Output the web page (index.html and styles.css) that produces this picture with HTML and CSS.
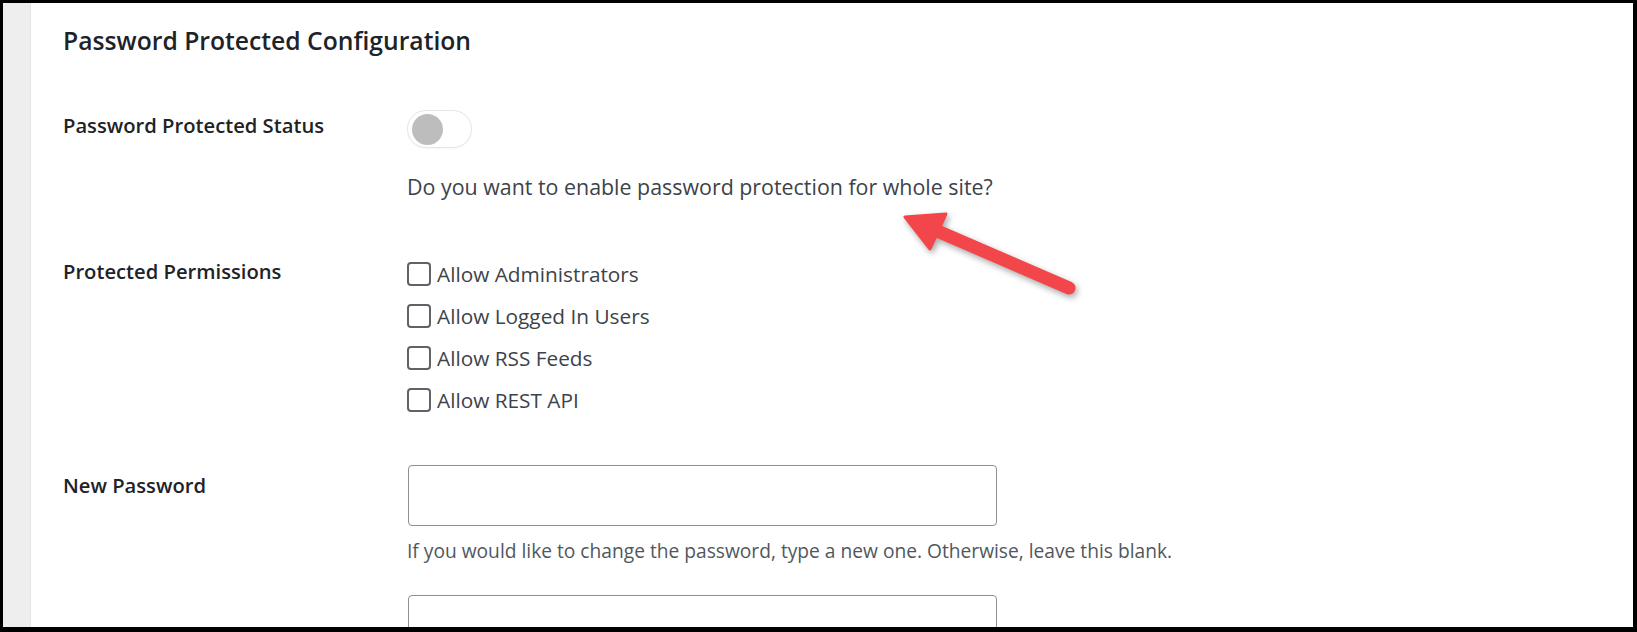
FILE: index.html
```html
<!DOCTYPE html>
<html lang="en">
<head>
  <meta charset="UTF-8" />
  <meta name="viewport" content="width=device-width, initial-scale=1" />
  <title>Password Protected Configuration</title>
  <link rel="stylesheet" href="styles.css">
</head>
<body>

  <div class="frame">
    <div class="strip"></div>

    <main class="content">
      <h1 class="title">Password Protected Configuration</h1>

      <div class="row row-status">
        <div class="row-label">Password Protected Status</div>
        <div class="row-field">
          <label class="toggle">
            <input type="checkbox">
            <span class="knob"></span>
          </label>
          <p class="desc">Do you want to enable password protection for whole site?</p>
        </div>
      </div>

      <div class="row row-perms">
        <div class="row-label">Protected Permissions</div>
        <div class="row-field">
          <label class="check"><input type="checkbox"> Allow Administrators</label>
          <label class="check"><input type="checkbox"> Allow Logged In Users</label>
          <label class="check"><input type="checkbox"> Allow RSS Feeds</label>
          <label class="check"><input type="checkbox"> Allow REST API</label>
        </div>
      </div>

      <div class="row row-pass">
        <div class="row-label">New Password</div>
        <div class="row-field">
          <input type="password" class="text-input">
          <p class="help">If you would like to change the password, type a new one. Otherwise, leave this blank.</p>
          <input type="password" class="text-input text-input-2">
        </div>
      </div>
    </main>

    <!-- callout arrow -->
    <svg class="arrow" width="190" height="100" viewBox="0 0 190 100">
      <line x1="40" y1="27" x2="174" y2="85" stroke="#f2464b" stroke-width="13" stroke-linecap="round" />
      <polygon points="10,14 51,11 35,46" fill="#f2464b" stroke="#f2464b" stroke-width="3" stroke-linejoin="round" />
    </svg>
  </div>

</body>
</html>
```

FILE: styles.css
```css
html, body {
  margin: 0;
  padding: 0;
  overflow: hidden;
}

body {
  font-family: 'Open Sans', 'Noto Sans', sans-serif;
  color: #1d2327;
  background: #fff;
}

.frame {
  position: relative;
  display: flex;
  box-sizing: border-box;
  width: 1637px;
  height: 632px;
  border-style: solid;
  border-color: #000;
  border-width: 3px 4px 5px 3px;
  overflow: hidden;
}

.strip {
  width: 27px;
  flex: none;
  background-color: #eeeeee;
  border-right: 1px solid #e4e4e4;
}

.content {
  flex: 1;
  padding: 22px 0 0 32px;
}

.title {
  margin: 0;
  font-size: 24.7px;
  line-height: 32px;
  font-weight: 600;
}

.row {
  display: grid;
  grid-template-columns: 344px 1fr;
}

.row-label {
  font-size: 20.2px;
  line-height: 28px;
  font-weight: 600;
}

.row-status {
  margin-top: 53px;
}

.row-status .row-label {
  padding-top: 1px;
}

.row-perms {
  margin-top: 51px;
}

.row-perms .row-label {
  padding-top: 4px;
}

.row-pass {
  margin-top: 44px;
}

.row-pass .row-label {
  padding-top: 6px;
}

/* toggle switch */
.toggle {
  display: flex;
  align-items: center;
  box-sizing: border-box;
  width: 65px;
  height: 38px;
  padding-left: 4px;
  border: 1px solid #e6e6e6;
  border-radius: 19px;
  background: #fff;
  box-shadow: 0 1px 2px rgba(0,0,0,0.04);
  cursor: pointer;
}

.toggle input {
  display: none;
}

.knob {
  width: 31px;
  height: 31px;
  border-radius: 50%;
  background-color: #bdbdbd;
}

.desc {
  margin: 24px 0 0;
  font-size: 21.4px;
  line-height: 30px;
  color: #3c434a;
}

/* checkboxes */
.check {
  display: flex;
  align-items: center;
  gap: 6px;
  height: 42px;
  font-size: 20.8px;
  line-height: 30px;
  color: #3c434a;
}

.check input {
  appearance: none;
  -webkit-appearance: none;
  box-sizing: border-box;
  width: 24px;
  height: 24px;
  margin: 0;
  border: 2px solid #5f6368;
  border-radius: 4px;
  background: #fff;
}

/* password fields */
.text-input {
  display: block;
  box-sizing: border-box;
  width: 589px;
  height: 61px;
  margin: 0 0 0 1px;
  border: 1px solid #8c8f94;
  border-radius: 4px;
  background: #fff;
}

.help {
  margin: 12px 0 0;
  font-size: 19.2px;
  line-height: 26px;
  color: #50575e;
}

.text-input-2 {
  margin-top: 31px;
}

.arrow {
  position: absolute;
  left: 892px;
  top: 200px;
  filter: drop-shadow(2px 3px 3px rgba(0,0,0,0.35));
}
```
